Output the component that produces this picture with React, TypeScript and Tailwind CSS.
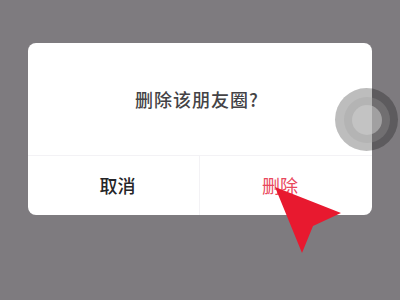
import React from "react";

const App = () => {
  return (
    <main className="relative w-[400px] h-[300px] overflow-hidden bg-[#7e7b7f] pt-[43px] px-[28px] font-['Noto_Sans_CJK_SC','Noto_Sans',sans-serif]">
      {/* Dialog */}
      <div className="w-[344px] h-[172px] bg-white rounded-[8px] flex flex-col">
        <div className="h-[113px] flex items-center justify-center pr-[6px] border-b border-[#f3f2f5]">
          <span className="text-[18px] font-medium text-[#444346] tracking-[1px]">
            删除该朋友圈?
          </span>
        </div>
        <div className="flex-1 grid grid-cols-2">
          <button className="flex items-center justify-center text-[18px] font-medium text-[#262527] border-r border-[#f3f2f5]">
            <span className="ml-[8px]">取消</span>
          </button>
          <button className="flex items-center justify-center text-[18px] text-[#e9485c]">
            <span className="mr-[12px]">删除</span>
          </button>
        </div>
      </div>

      {/* Touch indicator */}
      <div className="absolute left-[335px] top-[88px] w-[63px] h-[63px] rounded-full bg-[rgba(0,0,0,0.26)] flex items-center justify-center">
        <div className="w-[46px] h-[46px] rounded-full bg-[rgba(160,160,160,0.3)] flex items-center justify-center">
          <div className="w-[30px] h-[30px] rounded-full bg-[rgba(210,210,210,0.5)]" />
        </div>
      </div>

      {/* Red pointer arrow */}
      <svg
        className="absolute left-0 top-0"
        width="400"
        height="300"
        viewBox="0 0 400 300"
      >
        <polygon points="275,187 341,213 313,226 302,253" fill="#e8192f" />
      </svg>
    </main>
  );
};

export default App;
